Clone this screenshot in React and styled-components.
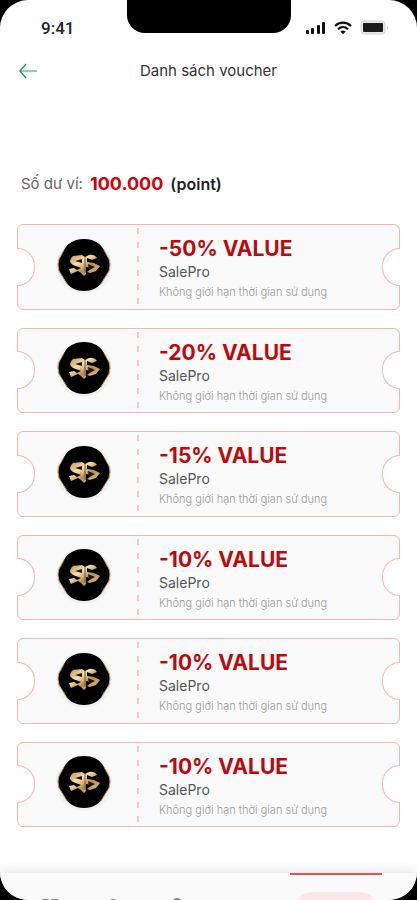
import { useId } from "react";
import styled, { createGlobalStyle } from "styled-components";

const GlobalStyle = createGlobalStyle`
  * {
    box-sizing: border-box;
  }
  body {
    margin: 0;
    background: #000;
    font-family: Inter, "Noto Sans", sans-serif;
  }
`;

const Phone = styled.div`
  display: flex;
  flex-direction: column;
  min-height: 100vh;
  background: #fff;
  border-radius: 28px;
  overflow: hidden;
`;

const StatusBar = styled.div`
  display: grid;
  grid-template-columns: 1fr 164px 1fr;
  height: 48px;
`;

const Time = styled.span`
  padding: 18px 0 0 41px;
  font-family: Roboto, sans-serif;
  font-size: 17px;
  font-weight: 500;
  line-height: 20px;
  color: #222;
`;

const Notch = styled.div`
  height: 33px;
  background: #000;
  border-radius: 0 0 18px 18px;
`;

const StatusIcons = styled.div`
  display: flex;
  align-items: center;
  justify-content: flex-end;
  gap: 8px;
  height: 20px;
  margin-top: 18px;
  padding-right: 28px;
`;

const Header = styled.header`
  display: grid;
  grid-template-columns: 24px 1fr 24px;
  align-items: center;
  height: 46px;
  padding: 0 16px;
`;

const BackButton = styled.button`
  display: flex;
  padding: 0 0 0 2px;
  border: 0;
  background: none;
  cursor: pointer;
`;

const Title = styled.h1`
  margin: 0;
  text-align: center;
  font-size: 15px;
  font-weight: 400;
  line-height: 20px;
  color: #333;
`;

const Balance = styled.p`
  display: flex;
  align-items: center;
  gap: 7px;
  margin: 78px 21px 28px;
  font-size: 15px;
  line-height: 24px;
  color: #666;
`;

const Amount = styled.strong`
  font-size: 18px;
  font-weight: 700;
  color: #d5000c;
`;

const Unit = styled.span`
  font-size: 16px;
  font-weight: 600;
  color: #222;
`;

const VoucherList = styled.ul`
  flex: 1;
  display: grid;
  grid-auto-rows: minmax(84px, 1fr);
  gap: 18px;
  margin: 0 17px 46px;
  padding: 0;
  list-style: none;
`;

const Ticket = styled.li`
  position: relative;
  display: grid;
  grid-template-columns: 121px 1fr;
  background: #fafafa;
  border: 1px solid #f9b4b4;
  border-radius: 6px;
`;

const Bite = styled.span`
  position: absolute;
  top: calc(50% - 19px);
  ${({ $side }) => $side}: -1px;
  width: 18px;
  height: 38px;
  background: #fff;
  border: 1px solid #f9b4b4;
  border-${({ $side }) => $side}: 0;
  border-radius: ${({ $side }) =>
    $side === "left" ? "0 19px 19px 0" : "19px 0 0 19px"};
`;

const LogoCell = styled.div`
  display: flex;
  align-items: center;
  justify-content: flex-end;
  padding-right: 26px;
  padding-bottom: 6px;
  margin: 3px 0 1px;
  background: repeating-linear-gradient(#fbc5c8 0 6px, transparent 6px 14px)
    right / 2px 100% no-repeat;
`;

const Info = styled.div`
  padding: 11px 0 0 20px;
`;

const Value = styled.h2`
  margin: 0;
  font-size: 21px;
  font-weight: 700;
  line-height: 26px;
  color: #bb0a0f;
`;

const Shop = styled.p`
  margin: 0;
  font-size: 14px;
  line-height: 20px;
  color: #555;
`;

const Term = styled.p`
  margin: 1px 0 0;
  font-size: 11px;
  font-weight: 300;
  line-height: 18px;
  color: #999;
`;

const TabBar = styled.nav`
  display: flex;
  height: 27px;
  padding: 0 35px 0 16px;
  overflow: hidden;
  background: #fafafa;
`;

const TabBarShadow = styled.div`
  box-shadow: 0 -2px 12px rgba(0, 0, 0, 0.12);
`;

const Tab = styled.a`
  flex: ${({ $active }) => ($active ? "0 0 92px" : "1")};
  display: flex;
  justify-content: center;
  padding-top: ${({ $active }) => ($active ? "17px" : "25px")};
  border-top: ${({ $active }) => ($active ? "2px solid #d9535b" : "0")};
  color: #888;
`;

const Pill = styled.span`
  width: 82px;
  height: 34px;
  padding: 5px 14px;
  border-radius: 17px;
  background: #ffe5e8;
  color: #d9535b;
`;

const vouchers = ["-50%", "-20%", "-15%", "-10%", "-10%", "-10%"];

function Signal() {
  return (
    <svg width="20" height="14" viewBox="0 0 20 14" fill="#111">
      <rect x="0" y="9" width="3" height="4" rx="1" />
      <rect x="5" y="7" width="3" height="6" rx="1" />
      <rect x="11" y="4" width="3" height="9" rx="1" />
      <rect x="16" y="1" width="3" height="12" rx="1" />
    </svg>
  );
}

function Wifi() {
  return (
    <svg width="18" height="14" viewBox="0 0 18 14" fill="none" stroke="#111">
      <path d="M1 5C5.5 0.6 12.5 0.6 17 5" strokeWidth="2.2" />
      <path d="M4 8.2C7 5.5 11 5.5 14 8.2" strokeWidth="2.2" />
      <path d="M6.3 10.5Q9 8.5 11.7 10.5L9 13.3Z" fill="#111" stroke="none" />
    </svg>
  );
}

function Battery() {
  return (
    <svg width="29" height="16" viewBox="0 0 29 16">
      <rect x="1" y="1" width="24" height="13" rx="3" fill="#e8e8e8" stroke="#d4d4d4" />
      <rect x="3" y="3" width="20" height="9" rx="1" fill="#1b1b1b" />
      <path d="M27 5.5v4q1.5-2 0-4" fill="#aaa" />
    </svg>
  );
}

function ShopLogo() {
  const gold = useId();
  return (
    <svg width="58" height="60" viewBox="0 0 58 60" role="img" aria-label="SalePro">
      <defs>
        <linearGradient id={gold} x1="0" y1="0" x2="1" y2="1">
          <stop offset="0" stopColor="#b98d4e" />
          <stop offset="0.35" stopColor="#f6dfae" />
          <stop offset="0.6" stopColor="#b88c50" />
          <stop offset="1" stopColor="#ebca92" />
        </linearGradient>
      </defs>
      <circle cx="29" cy="31" r="28" fill="#f1f1f1" />
      <path
        d="M29 4C39 4 45 8 49 15L54 24Q56 30 54 36L49 44C45 52 38 56 29 56C20 56 13 52 9 44L4 36Q2 30 4 24L9 15C13 8 19 4 29 4Z"
        fill="#000"
      />
      <path
        d="M9 15L4 24Q3 27 3 30L4 36L9 44L12 49M49 15L54 24Q55 27 55 30L54 36L49 44L46 49"
        fill="none"
        stroke="#c99a55"
        strokeWidth="1"
      />
      {/* interlaced S monogram with the dollar bar */}
      <path
        d="M18 21L27 20L30 22L34 20Q39 19 42 23L37 25L32 23V27L39 28L45 31L41 36L35 38L32 37L37 33L31 32V39L29 41L26 38L23 36L16 39L14 34L19 33L22 35L26 33L18 30Q12 26 18 21Z"
        fill={`url(#${gold})`}
      />
      <path
        d="M20 26L27 24V28ZM33 29L40 32L34 35Z"
        fill="#20150a"
      />
      <path d="M30 21V38" stroke="#5c4220" strokeWidth="0.8" />
    </svg>
  );
}

function Voucher({ value }) {
  return (
    <Ticket>
      <Bite $side="left" />
      <LogoCell>
        <ShopLogo />
      </LogoCell>
      <Info>
        <Value>{value} VALUE</Value>
        <Shop>SalePro</Shop>
        <Term>Không giới hạn thời gian sử dụng</Term>
      </Info>
      <Bite $side="right" />
    </Ticket>
  );
}

function App() {
  return (
    <>
      <GlobalStyle />
      <Phone>
        <StatusBar>
          <Time>9:41</Time>
          <Notch />
          <StatusIcons>
            <Signal />
            <Wifi />
            <Battery />
          </StatusIcons>
        </StatusBar>
        <Header>
          <BackButton aria-label="Back">
            <svg width="20" height="16" viewBox="0 0 20 16" fill="none" stroke="#239b66" strokeWidth="1.5">
              <path d="M8 1L2 8L8 15" />
              <path d="M2 8H19" strokeWidth="1.2" />
            </svg>
          </BackButton>
          <Title>Danh sách voucher</Title>
        </Header>
        <Balance>
          Số dư ví: <Amount>100.000</Amount> <Unit>(point)</Unit>
        </Balance>
        <VoucherList>
          {vouchers.map((value, i) => (
            <Voucher key={i} value={value} />
          ))}
        </VoucherList>
        <TabBarShadow>
          <TabBar>
            <Tab href="#home" aria-label="Home">
              <svg width="18" height="18" viewBox="0 0 18 18" fill="currentColor">
                <rect x="1" y="1" width="7" height="7" rx="1" />
                <rect x="10" y="1" width="7" height="7" rx="1" />
              </svg>
            </Tab>
            <Tab href="#orders" aria-label="Orders">
              <svg width="30" height="18" viewBox="0 0 30 18" fill="currentColor">
                <circle cx="9" cy="5" r="4" />
              </svg>
            </Tab>
            <Tab href="#shop" aria-label="Shop">
              <svg width="38" height="18" viewBox="0 0 38 18" fill="currentColor">
                <circle cx="9" cy="5" r="5" />
              </svg>
            </Tab>
            <Tab href="#news" aria-label="News" />
            <Tab href="#wallet" aria-label="Wallet" $active>
              <Pill>
                <svg width="12" height="12" viewBox="0 0 12 12" fill="currentColor">
                  <circle cx="6" cy="6" r="5" />
                </svg>
              </Pill>
            </Tab>
          </TabBar>
        </TabBarShadow>
      </Phone>
    </>
  );
}

export default App;
